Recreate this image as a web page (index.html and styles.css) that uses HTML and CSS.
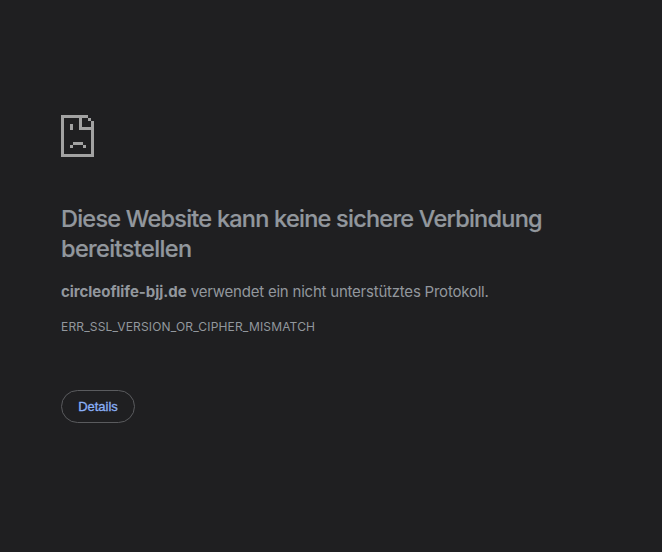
FILE: index.html
```html
<!DOCTYPE html>
<html lang="de">
<head>
<meta charset="utf-8">
<title>circleoflife-bjj.de</title>
<link rel="stylesheet" href="styles.css">
</head>
<body>
<main class="error-page">
  <svg class="icon" viewBox="0 0 33 42" aria-hidden="true" shape-rendering="crispEdges">
    <path d="M0 0H27V3H3V39H30V15H18V3H21V12H33V42H0ZM27 3H30V6H27ZM30 6H33V12H30ZM9 9H12V15H9ZM12 27H22V30H12ZM9 30H12V33H9ZM22 30H25V33H22Z"/>
  </svg>
  <h1 class="title">Diese Website kann keine sichere Verbindung<br><span class="title-end">bereitstellen</span></h1>
  <p class="summary"><strong class="host">circleoflife-bjj.de</strong> <span class="reason">verwendet ein nicht unterstütztes Protokoll.</span></p>
  <p class="code"><span>ERR_SSL_VERSION_OR_CIPHER_MISMATCH</span></p>
  <button class="details" type="button">Details</button>
</main>
</body>
</html>
```
FILE: styles.css
```css
body {
  margin: 0;
  background: #1f1f21;
  color: #92979d;
  font-family: Inter, "Liberation Sans", sans-serif;
}
.error-page {
  padding: 115px 61px 0;
}
.icon {
  display: block;
  width: 33px;
  height: 42px;
  fill: #a2a2a2;
}
.title {
  margin: 47px 0 0;
  font-size: 23.5px;
  font-weight: 500;
  line-height: 30px;
  letter-spacing: -0.76px;
  -webkit-text-stroke: 0.2px currentColor;
  white-space: nowrap;
}
.title-end {
  letter-spacing: -0.62px;
}
.summary {
  margin: 16px 0 0;
  font-size: 15px;
  line-height: 24px;
  white-space: nowrap;
}
.host {
  font-weight: 700;
  letter-spacing: -0.04px;
}
.reason {
  letter-spacing: -0.22px;
}
.code {
  margin: 14px 0 0;
  font-size: 12px;
  line-height: 18px;
  letter-spacing: 0.17px;
}
.details {
  display: block;
  box-sizing: border-box;
  width: 74px;
  height: 33px;
  margin: 54px 0 0;
  padding: 0;
  border: 1px solid #5a5b5e;
  border-radius: 17px;
  background: transparent;
  color: #8ab0f8;
  font: 13px "Liberation Sans", sans-serif;
  -webkit-text-stroke: 0.3px currentColor;
}
```
